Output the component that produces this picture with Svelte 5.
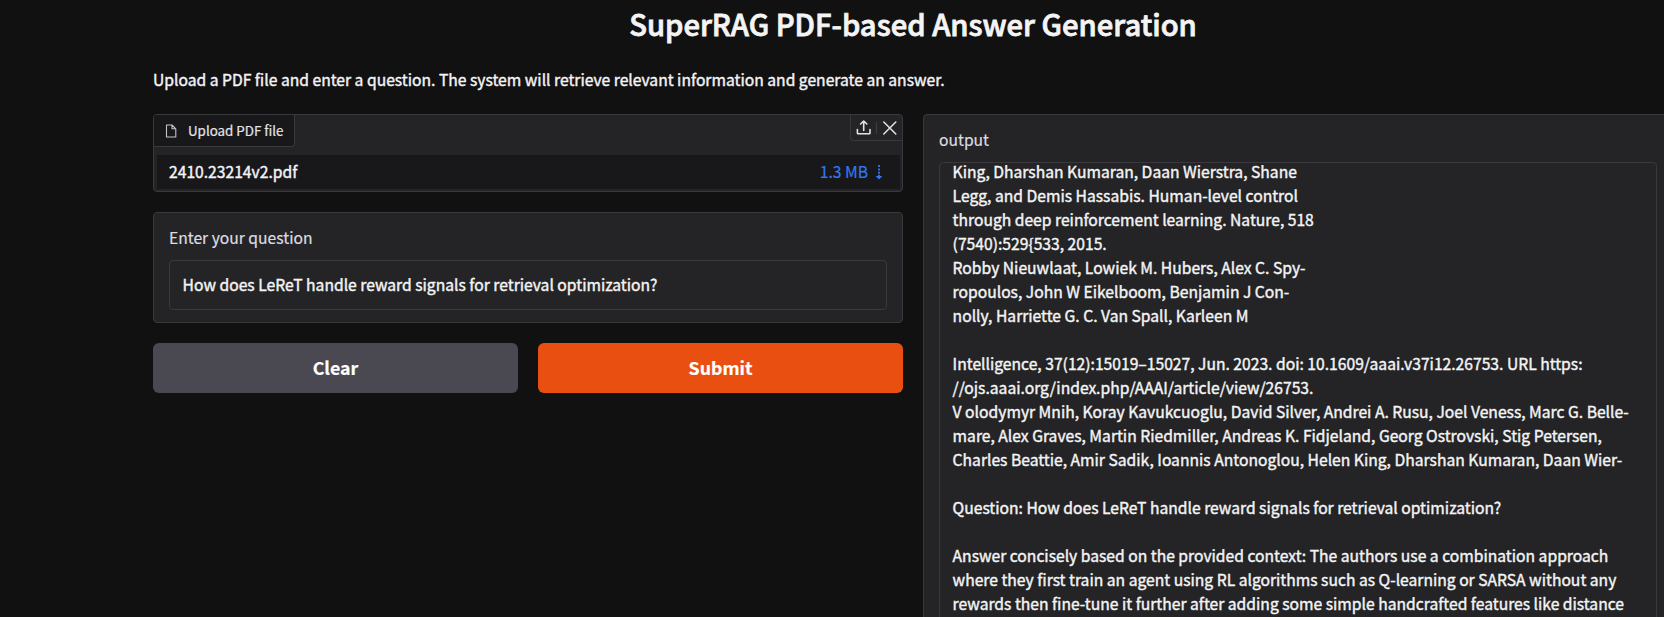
<script>
  const output = `King, Dharshan Kumaran, Daan Wierstra, Shane
Legg, and Demis Hassabis. Human-level control
through deep reinforcement learning. Nature, 518
(7540):529{533, 2015.
Robby Nieuwlaat, Lowiek M. Hubers, Alex C. Spy-
ropoulos, John W Eikelboom, Benjamin J Con-
nolly, Harriette G. C. Van Spall, Karleen M

Intelligence, 37(12):15019–15027, Jun. 2023. doi: 10.1609/aaai.v37i12.26753. URL https:
//ojs.aaai.org/index.php/AAAI/article/view/26753.
V olodymyr Mnih, Koray Kavukcuoglu, David Silver, Andrei A. Rusu, Joel Veness, Marc G. Belle-
mare, Alex Graves, Martin Riedmiller, Andreas K. Fidjeland, Georg Ostrovski, Stig Petersen,
Charles Beattie, Amir Sadik, Ioannis Antonoglou, Helen King, Dharshan Kumaran, Daan Wier-

Question: How does LeReT handle reward signals for retrieval optimization?

Answer concisely based on the provided context: The authors use a combination approach
where they first train an agent using RL algorithms such as Q-learning or SARSA without any
rewards then fine-tune it further after adding some simple handcrafted features like distance`;
</script>

<main>
  <h1>SuperRAG PDF-based Answer Generation</h1>
  <p class="intro">Upload a PDF file and enter a question. The system will retrieve relevant information and generate an answer.</p>
  <div class="columns">
    <section class="left">
      <div class="panel file">
        <div class="filehead">
          <div class="tag">
            <svg width="12" height="14" viewBox="0 0 12 14" fill="none" stroke="currentColor" stroke-width="1.1" stroke-linejoin="round"><path d="M7 1H1.5v12h9.3V4.8zM7 1v3.8h3.8" /></svg>
            <span>Upload PDF file</span>
          </div>
          <div class="tools">
            <svg width="16" height="16" viewBox="0 0 16 16" fill="none" stroke="currentColor" stroke-width="1.6" stroke-linecap="round" stroke-linejoin="round"><path d="M1.4 9.5V13q0 .8.8.8h11q.8 0 .8-.8V9.5M7.7 10.4V1.4M4.6 4L7.7 1 10.8 4" /></svg>
            <i></i>
            <svg width="16" height="16" viewBox="0 0 16 16" fill="none" stroke="currentColor" stroke-width="1.5" stroke-linecap="round"><path d="M1.8 2l12 12M13.8 2l-12 12" /></svg>
          </div>
        </div>
        <div class="filerow">
          <span>2410.23214v2.pdf</span>
          <span class="size">1.3 MB
            <svg width="8" height="15" viewBox="0 0 8 15" fill="currentColor"><path d="M3.1 0h1.8v2H3.1zM3.1 3.4h1.8v2H3.1zM3.1 6.8h1.8v2H3.1zM3.1 9.8h1.8v1.3H7.4L4 14.5.6 11.1h2.5z" /></svg>
          </span>
        </div>
      </div>
      <div class="panel question">
        <span class="label">Enter your question</span>
        <div class="input">How does LeReT handle reward signals for retrieval optimization?</div>
      </div>
      <div class="buttons"><button class="clear">Clear</button><button class="submit">Submit</button></div>
    </section>
    <section class="panel right">
      <span class="label">output</span>
      <div class="output">{output}</div>
    </section>
  </div>
</main>

<style>
  :global(body) { background: #111112; overflow: hidden; }
  main { width: 1520px; padding-left: 153px; height: 617px; overflow: hidden; color: #f4f4f5; font: 400 15.66px/24px "Noto Sans CJK SC", sans-serif; -webkit-text-stroke: 0.4px currentColor; }
  h1 { margin: 0; padding-top: 5px; font-size: 29.2px; line-height: 36px; font-weight: 500; text-align: center; -webkit-text-stroke-width: 0.8px; }
  .intro { margin: 27px 0 22px; }
  .columns { display: flex; gap: 20px; }
  .left { width: 750px; display: flex; flex-direction: column; gap: 20px; }
  .panel { background: #242426; border: 1px solid #38383d; border-radius: 4px; box-sizing: border-box; }
  .file { height: 78px; padding-bottom: 2px; overflow: hidden; }
  .filehead { display: flex; justify-content: space-between; align-items: flex-start; height: 40px; }
  .tag { display: flex; align-items: center; gap: 11px; height: 31px; padding: 0 10px 0 11px; font-size: 13.35px; color: #e4e4e7; background: #18181b; border: solid #38383d; border-width: 0 1px 1px 0; border-bottom-right-radius: 4px; }
  .tag svg { color: #c4c4c8; }
  .tag span { -webkit-text-stroke-width: 0.2px; }
  .tools { display: flex; align-items: center; height: 25px; padding: 0 4px 0 5px; color: #e4e4e7; border: solid #38383d; border-width: 0 0 1px 1px; border-bottom-left-radius: 4px; }
  .tools i { width: 1px; height: 12px; margin: 0 5px 0 4px; background: #3f3f46; }
  .filerow { display: flex; justify-content: space-between; align-items: center; margin: 0 2px 0 3px; height: 34px; padding: 0 17px 0 12px; background: #18181b; box-sizing: border-box; }
  .size { display: flex; align-items: center; gap: 7px; color: #3478f0; -webkit-text-stroke-width: 0.2px; }
  .question { height: 111px; padding: 13px 15px; }
  .label { display: block; color: #dcdce0; -webkit-text-stroke-width: 0.2px; }
  .input { margin-top: 10px; height: 50px; box-sizing: border-box; border: 1px solid #38383d; border-radius: 4px; padding: 12px 12.6px; }
  .buttons { display: flex; gap: 20px; }
  button { flex: 1; height: 50px; padding: 0 0 2px; border: 0; border-radius: 6px; color: #fff; font: 700 17.8px "Noto Sans CJK SC", sans-serif; -webkit-text-stroke: 0.2px currentColor; }
  .clear { background: #4a4951; }
  .submit { background: #e94f10; }
  .right { width: 750px; height: 520px; padding: 13px 15px; }
  .output { margin-top: 10px; border: 1px solid #38383d; border-radius: 4px; height: 500px; padding: 0 12.6px; white-space: pre; overflow: hidden; }
  .output::before { content: ""; display: block; margin-top: -3px; }
</style>
